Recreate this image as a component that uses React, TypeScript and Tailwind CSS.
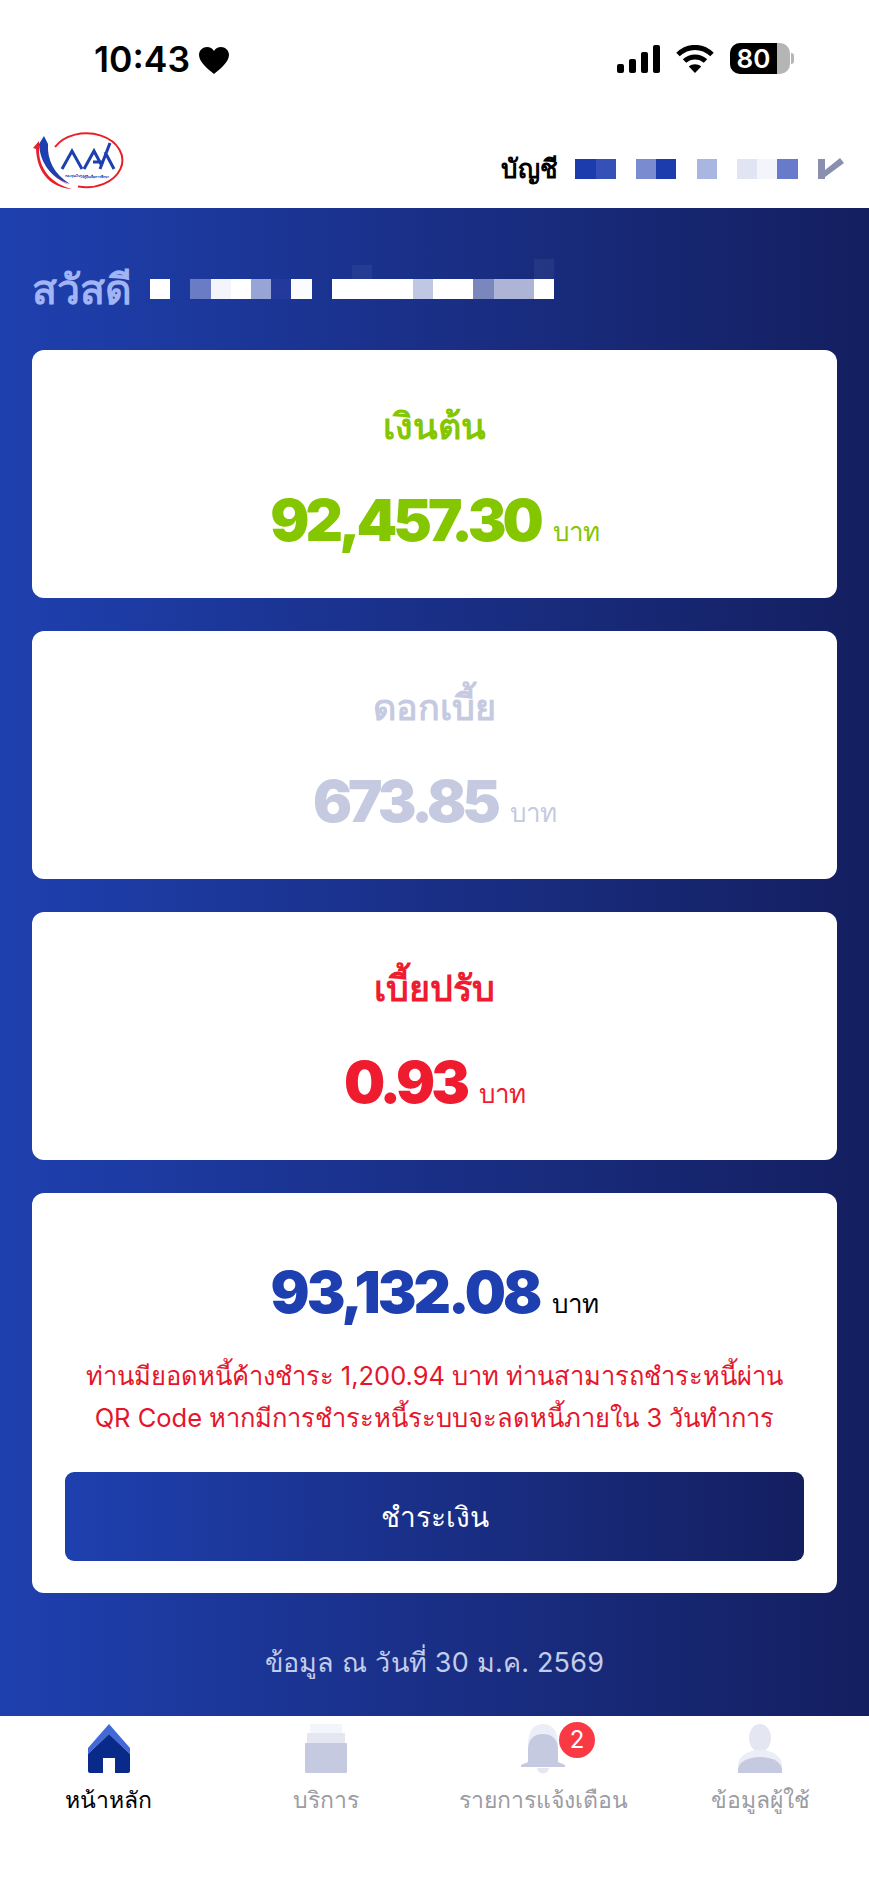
const gradient = "bg-gradient-to-r from-[#1e40af] to-[#141f60]";

const nameBlocks = [
  { w: "w-[20px]", bg: "bg-white" },
  { w: "w-[20px]", bg: "bg-transparent" },
  { w: "w-[21px]", bg: "bg-[#6a7cc4]" },
  { w: "w-[20px]", bg: "bg-[#f3f5fb]" },
  { w: "w-[20px]", bg: "bg-white" },
  { w: "w-[20px]", bg: "bg-[#97a5d6]" },
  { w: "w-[20px]", bg: "bg-[#233a9c]" },
  { w: "w-[21px]", bg: "bg-[#fbfcff]" },
  { w: "w-[20px]", bg: "bg-transparent" },
  { w: "w-[81px]", bg: "bg-white" },
  { w: "w-[20px]", bg: "bg-[#c0c7e3]" },
  { w: "w-[40px]", bg: "bg-white" },
  { w: "w-[21px]", bg: "bg-[#7a87bd]" },
  { w: "w-[40px]", bg: "bg-[#adb4d6]" },
  { w: "w-[20px]", bg: "bg-white" },
];

const accountBlocks = [
  { w: "w-[21px]", bg: "bg-[#1c3cae]" },
  { w: "w-[20px]", bg: "bg-[#3551b8]" },
  { w: "w-[20px]", bg: "bg-transparent" },
  { w: "w-[20px]", bg: "bg-[#7a8ccf]" },
  { w: "w-[20px]", bg: "bg-[#1c3cae]" },
  { w: "w-[21px]", bg: "bg-transparent" },
  { w: "w-[20px]", bg: "bg-[#a9b6e1]" },
  { w: "w-[20px]", bg: "bg-transparent" },
  { w: "w-[20px]", bg: "bg-[#e0e4f3]" },
  { w: "w-[20px]", bg: "bg-[#f3f5fa]" },
  { w: "w-[21px]", bg: "bg-[#677bca]" },
  { w: "w-[20px]", bg: "bg-transparent" },
];

const StatusBar = () => (
  <div className="flex h-[120px] items-start justify-between pl-[94px] pr-[75px] pt-[40px]">
    <div className="flex items-center gap-[9px]">
      <span className="text-[35.500px] font-semibold leading-[40px] text-black">10:43</span>
      <svg width="30" height="27" viewBox="0 0 30 27">
        <path d="M15 27C9 22 0 15 0 8C0 3 4 0 8 0C11 0 13.500 1.500 15 4C16.500 1.500 19 0 22 0C26 0 30 3 30 8C30 15 21 22 15 27Z" fill="#000" />
      </svg>
    </div>
    <div className="flex items-center gap-[16px] pt-[3px]">
      <svg width="43" height="28" viewBox="0 0 43 28" fill="#000">
        <rect x="0" y="19" width="7" height="9" rx="2" />
        <rect x="12" y="14" width="7" height="14" rx="2" />
        <rect x="24" y="7" width="7" height="21" rx="2" />
        <rect x="36" y="0" width="7" height="28" rx="2" />
      </svg>
      <svg width="38" height="28" viewBox="0 0 38 28" fill="none" stroke="#000" strokeWidth="5">
        <path d="M2 9.500C12 0 26 0 36 9.500" />
        <path d="M8.500 16C14.500 10.500 23.500 10.500 29.500 16" />
        <path d="M19 28L12.800 21.500C16.300 18.500 21.700 18.500 25.200 21.500Z" fill="#000" stroke="none" />
      </svg>
      <div className="flex items-center">
        <div className="relative flex h-[31px] w-[60px] items-center overflow-hidden rounded-[10px] bg-[#b5b5b5]">
          <div className="flex h-full w-[47px] items-center justify-center bg-black text-[26px] font-semibold leading-none text-white">
            80
          </div>
        </div>
        <div className="ml-[1px] h-[11px] w-[3px] rounded-r-full bg-[#b5b5b5]" />
      </div>
    </div>
  </div>
);

const Logo = () => (
  <svg width="96" height="60" viewBox="0 0 96 60" fill="none">
    <path d="M25 15A36 27 0 1 1 48 54.500" stroke="#e8202c" strokeWidth="2" />
    <path d="M3 16L9 9L9 20C10 38 22 52 42 57C22 56 7 42 6 17Z" fill="#e8202c" />
    <path d="M13 11C13 28 22 46 42 54C26 48 18 40 15 28Z" fill="#e8202c" />
    <path d="M9 12L14 4L18 12C17 28 24 42 40 52C22 46 10 32 9 12Z" fill="#1d3fb0" />
    <path d="M32 37L42 19L52 37M54 37L64 19L72 34M63 30H74M70 37L80 11M75 20L84 37" stroke="#1d3fb0" strokeWidth="3" />
    <text x="35" y="45" fontSize="3.500" fontWeight="700" fill="#1d3fb0" transform="rotate(2 35 45)">
      กองทุนเงินให้กู้ยืมเพื่อการศึกษา
    </text>
  </svg>
);

const Header = () => (
  <div className="flex h-[88px] items-start justify-between pl-[30px] pr-[25px] pt-[12px]">
    <Logo />
    <div className="flex items-center gap-[17px] pt-[24px]">
      <span className="text-[26px] font-extrabold leading-none text-black">บัญชี</span>
      <div className="flex h-[20px]">
        {accountBlocks.map((b, i) => (
          <div key={i} className={`h-full ${b.w} ${b.bg}`} />
        ))}
        <svg width="26" height="22" viewBox="0 0 26 22" className="-mt-[2px]">
          <path d="M0 2H7V13L22 1L26 6L7 20V22H0Z" fill="#8a8fb0" />
        </svg>
      </div>
    </div>
  </div>
);

const AmountCard = ({
  title,
  amount,
  color,
}: {
  title: string;
  amount: string;
  color: string;
}) => (
  <div className="flex h-[248px] flex-col items-center rounded-[12px] bg-white pt-[54px]">
    <div className={`text-[36px] font-black leading-[44px] ${color}`}>{title}</div>
    <div className="mt-[36px] flex items-baseline gap-[13px]">
      <span className={`text-[58px] font-black leading-[72px] tracking-[-4px] ${color}`}>{amount}</span>
      <span className={`text-[26px] leading-none tracking-[-1px] ${color}`}>บาท</span>
    </div>
  </div>
);

const TotalCard = () => (
  <div className="flex h-[400px] flex-col rounded-[12px] bg-white px-[33px] pt-[63px]">
    <div className="flex items-baseline justify-center gap-[13px]">
      <span className="text-[58px] font-black leading-[72px] tracking-[-3px] text-[#1d3fb0]">93,132.08</span>
      <span className="text-[26px] leading-none tracking-[-1px] text-black">บาท</span>
    </div>
    <div className="mt-[27px] whitespace-nowrap text-center text-[25.500px] leading-[42px] text-[#e5152b]">
      <div>ท่านมียอดหนี้ค้างชำระ 1,200.94 บาท ท่านสามารถชำระหนี้ผ่าน</div>
      <div>QR Code หากมีการชำระหนี้ระบบจะลดหนี้ภายใน 3 วันทำการ</div>
    </div>
    <button className={`mt-[33px] flex h-[89px] w-full items-center justify-center rounded-[9px] text-[28px] font-medium text-white ${gradient}`}>
      ชำระเงิน
    </button>
  </div>
);

const NavItem = ({
  label,
  active,
  icon,
}: {
  label: string;
  active?: boolean;
  icon: React.ReactNode;
}) => (
  <div className="flex flex-col items-center">
    {icon}
    <span className={`mt-[8px] whitespace-nowrap text-[23px] leading-[36px] ${active ? "text-black" : "text-[#9c9ca3]"}`}>
      {label}
    </span>
  </div>
);

const HomeIcon = () => (
  <svg width="44" height="50" viewBox="0 0 44 50">
    <path d="M22 0L43 24V30L22 10L1 30V24Z" fill="#4169d8" />
    <path d="M22 10L43 30V47Q43 49 41 49H28V34H16V49H3Q1 49 1 47V30Z" fill="#0a2a8a" />
  </svg>
);

const ServiceIcon = () => (
  <svg width="44" height="50" viewBox="0 0 44 50">
    <rect x="6" y="0" width="32" height="14" fill="#f4f5fb" />
    <rect x="3" y="9" width="38" height="10" fill="#e4e6f2" />
    <rect x="1" y="19" width="42" height="30" rx="1" fill="#c5cae0" />
  </svg>
);

const BellIcon = () => (
  <div className="relative">
    <svg width="44" height="50" viewBox="0 0 44 50">
      <path d="M22 0C12 0 7 8 7 20V40H37V20C37 8 32 0 22 0Z" fill="#eceef7" />
      <path d="M22 10C12 10 7 16 7 26V38L0 41V43H44V41L37 38V26C37 16 32 10 22 10Z" fill="#c5cae0" />
      <path d="M16 44H28C27 51 17 51 16 44Z" fill="#e4e6f2" />
    </svg>
    <div className="absolute -right-[30px] -top-[2px] flex h-[36px] w-[36px] items-center justify-center rounded-full bg-[#f93a44] text-[24px] leading-none text-white">
      2
    </div>
  </div>
);

const UserIcon = () => (
  <svg width="44" height="50" viewBox="0 0 44 50">
    <ellipse cx="22" cy="14" rx="11" ry="14" fill="#e4e6f2" />
    <path d="M0 49V42C0 32 10 26 22 26C34 26 44 32 44 42V49Z" fill="#eceef7" />
    <path d="M0 49V46C0 38 10 33 22 33C34 33 44 38 44 46V49Z" fill="#c5cae0" />
  </svg>
);

export default function App() {
  return (
    <div className="flex h-[1884px] w-[869px] flex-col bg-white font-['Inter','Noto_Sans',sans-serif]">
      <StatusBar />
      <Header />
      <main className={`h-[1508px] px-[32px] pt-[69px] ${gradient}`}>
        <div className="flex h-[24px] items-center">
          <span className="w-[98px] whitespace-nowrap text-[41px] font-black leading-none text-[#a3b4f5]">สวัสดี</span>
          <div className="relative ml-[20px] flex h-[20px]">
            {nameBlocks.map((b, i) => (
              <div key={i} className={`h-full ${b.w} ${b.bg}`} />
            ))}
            <div className="absolute -top-[14px] left-[202px] h-[14px] w-[20px] bg-white/5" />
            <div className="absolute -top-[20px] left-[384px] h-[20px] w-[20px] bg-white/5" />
          </div>
        </div>
        <div className="mt-[49px] flex flex-col gap-[33px]">
          <AmountCard title="เงินต้น" amount="92,457.30" color="text-[#84c600]" />
          <AmountCard title="ดอกเบี้ย" amount="673.85" color="text-[#c5cae0]" />
          <AmountCard title="เบี้ยปรับ" amount="0.93" color="text-[#ee1c2e]" />
          <TotalCard />
        </div>
        <div className="mt-[50px] text-center text-[27px] leading-[40px] tracking-[0.2px] text-[#c3cce8]">
          ข้อมูล ณ วันที่ 30 ม.ค. 2569
        </div>
      </main>
      <nav className="grid h-[168px] grid-cols-4 bg-white pt-[8px]">
        <NavItem label="หน้าหลัก" active icon={<HomeIcon />} />
        <NavItem label="บริการ" icon={<ServiceIcon />} />
        <NavItem label="รายการแจ้งเตือน" icon={<BellIcon />} />
        <NavItem label="ข้อมูลผู้ใช้" icon={<UserIcon />} />
      </nav>
    </div>
  );
}
